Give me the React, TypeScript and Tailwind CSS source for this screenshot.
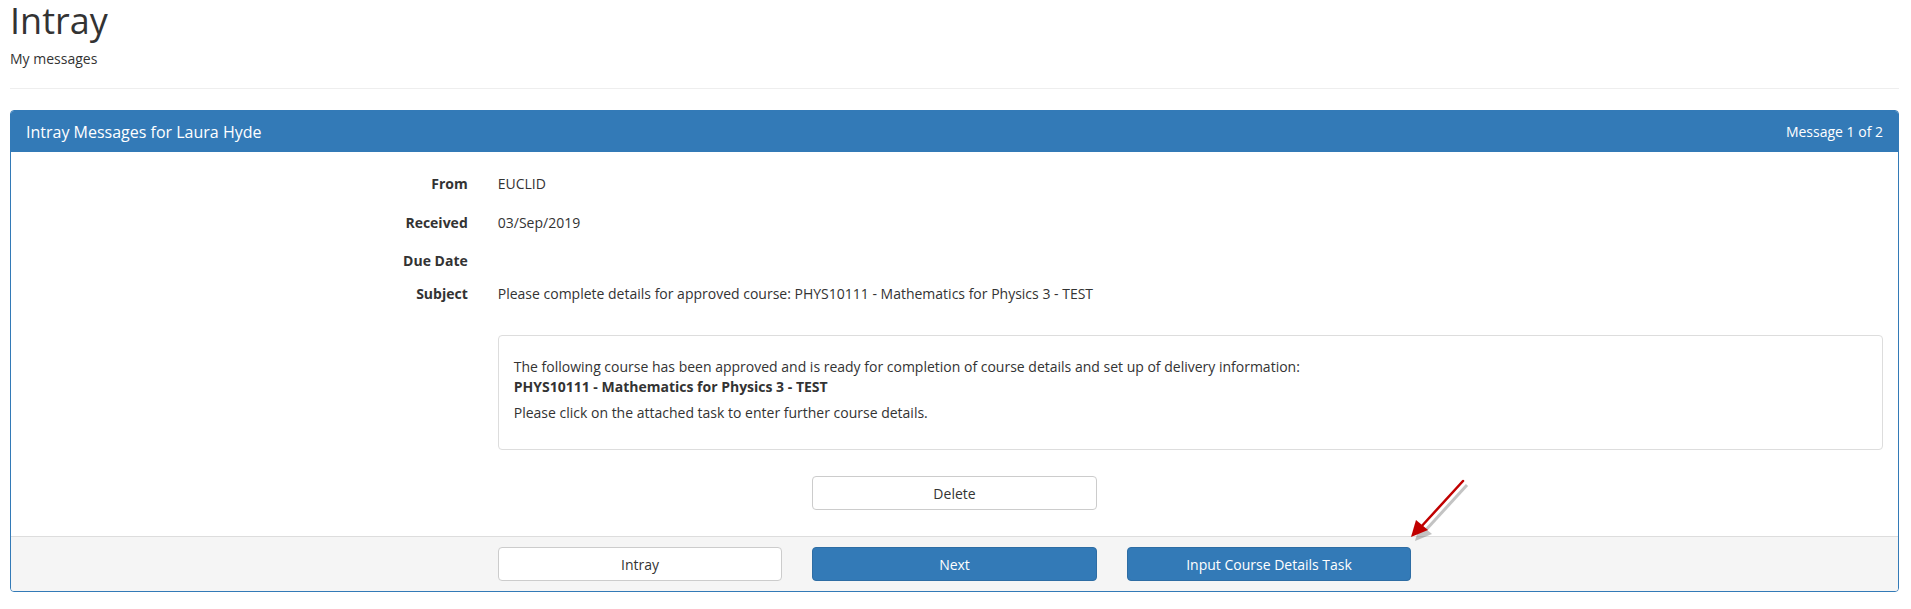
import React from 'react'

const labelRow = 'col-span-3 px-[15px] text-right font-bold leading-[20px]'
const valueRow = 'col-span-9 px-[15px] leading-[20px]'

function Btn({ children, primary }: { children: React.ReactNode; primary?: boolean }) {
  return (
    <button
      className={
        primary
          ? 'w-full h-[34px] rounded-[4px] border border-[#2e6da4] bg-[#337ab7] text-white text-[14px]'
          : 'w-full h-[34px] rounded-[4px] border border-[#ccc] bg-white text-[#333] text-[14px]'
      }
    >
      {children}
    </button>
  )
}

export default function App() {
  return (
    <div className="relative min-h-screen bg-white text-[#333] text-[14px] font-['Open_Sans',sans-serif]">
      <div className="pl-[10px] pr-[12px]">
        <h1 className="pt-[1px] text-[36px] leading-[40px] font-normal">Intray</h1>
        <p className="mt-[8px] text-[14px] leading-[20px]">My messages</p>
        <hr className="mt-[19px] border-t border-[#eee]" />

        <div className="mt-[21px] rounded-[4px] border border-[#337ab7]">
          <div className="flex h-[41px] items-center justify-between rounded-t-[3px] bg-[#337ab7] px-[15px] text-white">
            <span className="text-[16px]">Intray Messages for Laura Hyde</span>
            <span className="text-[14px]">Message 1 of 2</span>
          </div>

          <div className="grid grid-cols-12 pt-[22px]">
            <div className={labelRow}>From</div>
            <div className={valueRow}>EUCLID</div>

            <div className={labelRow + ' mt-[19px]'}>Received</div>
            <div className={valueRow + ' mt-[19px]'}>03/Sep/2019</div>

            <div className={labelRow + ' mt-[18px]'}>Due Date</div>
            <div className={valueRow + ' mt-[18px]'}></div>

            <div className={labelRow + ' mt-[13px]'}>Subject</div>
            <div className={valueRow + ' mt-[13px]'}>
              Please complete details for approved course: PHYS10111 - Mathematics for Physics 3 - TEST
            </div>

            <div className="col-span-9 col-start-4 mt-[31px] px-[15px]">
              <div className="rounded-[4px] border border-[#ddd] px-[15px] pt-[21px] pb-[26px] leading-[20px]">
                <p>
                  The following course has been approved and is ready for completion of course details and set up of
                  delivery information:
                </p>
                <p className="font-bold">PHYS10111 - Mathematics for Physics 3 - TEST</p>
                <p className="mt-[6px]">Please click on the attached task to enter further course details.</p>
              </div>
            </div>

            <div className="col-span-2 col-start-6 mt-[26px] mb-[26px] px-[15px]">
              <Btn>Delete</Btn>
            </div>
          </div>

          <div className="grid grid-cols-12 rounded-b-[3px] border-t border-[#ddd] bg-[#f5f5f5] py-[10px]">
            <div className="col-span-2 col-start-4 px-[15px]">
              <Btn>Intray</Btn>
            </div>
            <div className="col-span-2 px-[15px]">
              <Btn primary>Next</Btn>
            </div>
            <div className="col-span-2 px-[15px]">
              <Btn primary>Input Course Details Task</Btn>
            </div>
          </div>
        </div>
      </div>

      {/* annotation arrow */}
      <svg className="pointer-events-none absolute left-[1400px] top-[470px]" width="90" height="90" viewBox="0 0 90 90">
        <g transform="translate(4,4)" opacity="0.35">
          <line x1="63" y1="11" x2="20" y2="58" stroke="#555" strokeWidth="3" />
          <polygon points="11,67 16,50 28,60" fill="#555" />
        </g>
        <line x1="63" y1="11" x2="20" y2="58" stroke="#c00000" strokeWidth="2.5" strokeLinecap="round" />
        <polygon points="11,67 16,50 28,60" fill="#c00000" />
      </svg>
    </div>
  )
}
